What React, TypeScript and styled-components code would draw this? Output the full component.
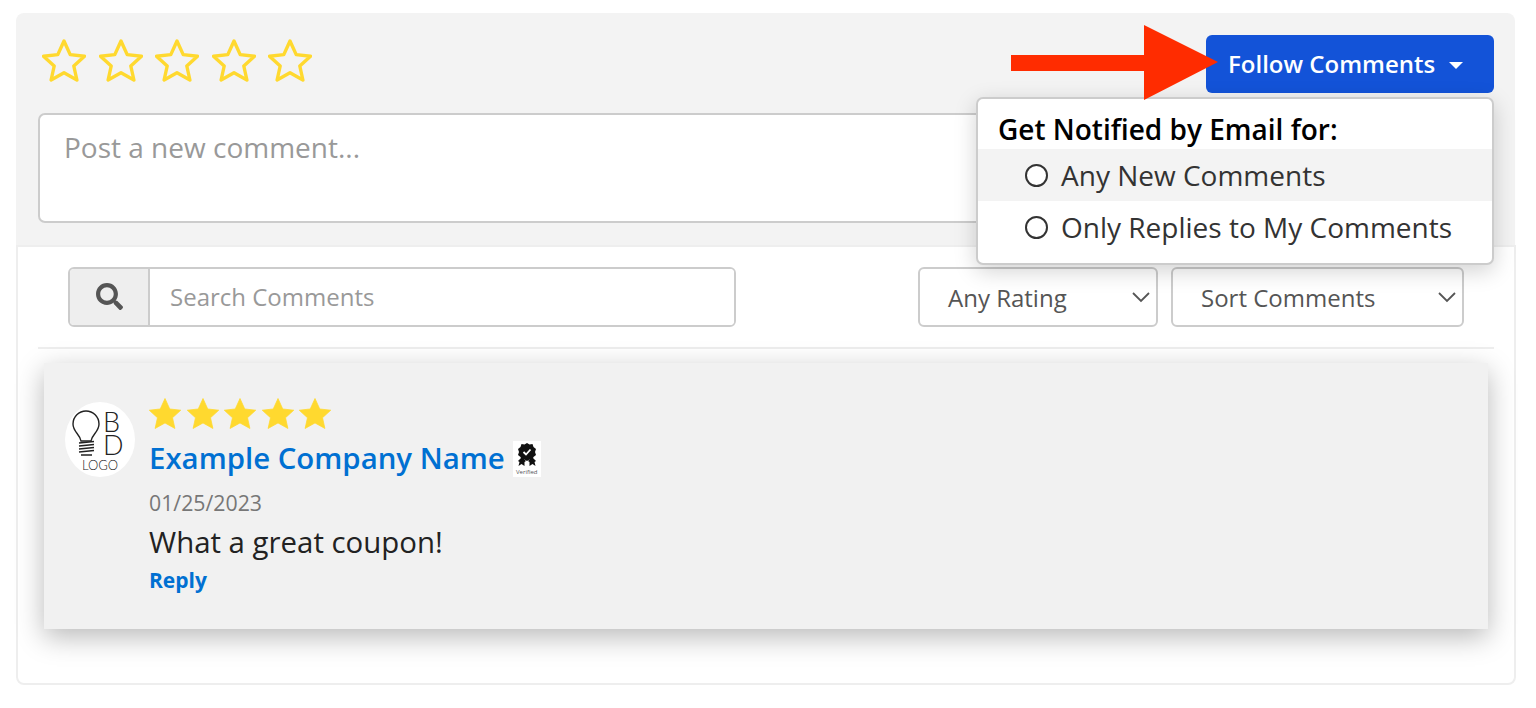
import React from "react";
import styled, { createGlobalStyle } from "styled-components";
import { FaSearch } from "react-icons/fa";

const Global = createGlobalStyle`
  html, body { margin: 0; padding: 0; background: #fff; }
  body { font-family: "Open Sans", "Liberation Sans", sans-serif; overflow: hidden; }
  * { box-sizing: border-box; }
`;

const Page = styled.div`
  position: relative;
  width: 1536px;
  height: 708px;
  padding: 13px 20px 0 16px;
`;

const TopPanel = styled.section`
  width: 1499px;
  height: 232px;
  padding: 22px 21px 0 22px;
  background: #f3f3f3;
  border-radius: 8px 8px 0 0;
`;

const Header = styled.div`
  display: flex;
  justify-content: space-between;
  align-items: flex-start;
  height: 58px;
`;

const RatingInput = styled.div`
  display: flex;
  gap: 12.5px;
  padding: 4px 0 0 4px;
`;

const FollowButton = styled.button`
  display: flex;
  align-items: center;
  width: 288px;
  height: 58px;
  padding: 0 0 2px 22px;
  border: 0;
  border-radius: 6px;
  background: #1353d8;
  color: #fff;
  font: 600 24px "Open Sans", sans-serif;
`;

const Caret = styled.span`
  width: 0;
  height: 0;
  margin: 4px 0 0 14px;
  border-left: 7.5px solid transparent;
  border-right: 7.5px solid transparent;
  border-top: 7.5px solid #fff;
`;

const ComposerWrap = styled.div`
  position: relative;
  margin-top: 20px;
  height: 110px;
`;

const Composer = styled.textarea`
  display: block;
  width: 100%;
  height: 100%;
  padding: 13px 24px;
  border: 2px solid #ccc;
  border-radius: 7px;
  background: #fff;
  resize: none;
  font: 400 28px/38px "Open Sans", sans-serif;
  &::placeholder { color: #999; opacity: 1; }
`;

const PostButton = styled.div`
  position: absolute;
  top: 3px;
  right: 0;
  bottom: 2px;
  width: 120px;
  border-radius: 0 6px 6px 0;
  background: #222;
`;

const Arrow = styled.svg`
  position: absolute;
  left: 1011px;
  top: 25px;
  z-index: 3;
`;

const Dropdown = styled.div`
  position: absolute;
  left: 976px;
  top: 97px;
  z-index: 2;
  width: 518px;
  height: 168px;
  padding-top: 11px;
  background: #fff;
  border: 2px solid #ccc;
  border-radius: 7px;
  box-shadow: 0 6px 22px rgba(0, 0, 0, 0.18);
`;

const DropdownTitle = styled.div`
  height: 39px;
  padding-left: 20px;
  color: #000;
  font-size: 28px;
  font-weight: 600;
  line-height: 38px;
`;

const Option = styled.div<{ $active?: boolean }>`
  display: flex;
  align-items: center;
  gap: 13px;
  height: 52px;
  padding-left: 47px;
  background: ${(p) => (p.$active ? "#f3f3f3" : "#fff")};
  color: #333;
  font-size: 28px;
`;

const Radio = styled.span`
  flex: none;
  width: 23px;
  height: 23px;
  border: 2px solid #333;
  border-radius: 50%;
  background: #fff;
`;

const ListCard = styled.section`
  width: 1500px;
  height: 440px;
  padding: 20px 20px 0;
  background: #fff;
  border: 2px solid #eee;
  border-radius: 0 0 8px 8px;
`;

const Filters = styled.div`
  display: flex;
  justify-content: space-between;
  height: 60px;
  padding: 0 30px;
`;

const SearchGroup = styled.div`
  display: flex;
  width: 668px;
  border: 2px solid #ccc;
  border-radius: 6px;
  overflow: hidden;
`;

const SearchAddon = styled.div`
  display: flex;
  align-items: center;
  justify-content: center;
  width: 80px;
  padding-bottom: 2px;
  background: #eee;
  border-right: 2px solid #ccc;
  color: #555;
  font-size: 27px;
`;

const SearchInput = styled.input`
  flex: 1;
  min-width: 0;
  padding: 0 20px 2px;
  border: 0;
  outline: 0;
  font: 400 24px "Open Sans", sans-serif;
  &::placeholder { color: #999; opacity: 1; }
`;

const Selects = styled.div`
  display: flex;
  gap: 13px;
`;

const SelectBox = styled.div<{ $width: number }>`
  display: flex;
  align-items: center;
  justify-content: space-between;
  width: ${(p) => p.$width}px;
  padding: 0 5px 0 28px;
  border: 2px solid #ccc;
  border-radius: 6px;
  background: #fff;
  color: #555;
  font-size: 24px;
`;

const Divider = styled.hr`
  height: 2px;
  margin: 20px 0 14px;
  border: 0;
  background: #eee;
`;

const CommentCard = styled.article`
  display: flex;
  gap: 14px;
  height: 266px;
  margin: 0 6px;
  padding: 34px 21px 0;
  background: #f1f1f1;
  box-shadow: 0 8px 26px rgba(0, 0, 0, 0.28);
`;

const Avatar = styled.svg`
  flex: none;
  margin-top: 5px;
`;

const CommentBody = styled.div`
  display: flex;
  flex-direction: column;
`;

const RatingRow = styled.div`
  display: flex;
  gap: 3.5px;
  height: 36px;
  margin-left: -1px;
`;

const NameRow = styled.div`
  display: flex;
  align-items: center;
  gap: 8px;
  height: 36px;
  margin-top: 8px;
`;

const CompanyName = styled.a`
  margin-top: -2px;
  color: #0070d2;
  font-size: 29.4px;
  font-weight: 600;
  line-height: 36px;
`;

const VerifiedBadge = styled.div`
  display: flex;
  flex-direction: column;
  align-items: center;
  width: 28px;
  height: 36px;
  background: #fff;
`;

const VerifiedLabel = styled.span`
  color: #555;
  font-size: 6px;
  line-height: 8px;
`;

const DateText = styled.div`
  margin-top: 13px;
  color: #777;
  font-size: 21.3px;
  line-height: 26px;
`;

const CommentText = styled.p`
  margin: 6px 0 0;
  color: #222;
  font-size: 29.4px;
  line-height: 40px;
`;

const ReplyLink = styled.a`
  margin-top: 3px;
  color: #0070d2;
  font-size: 21px;
  font-weight: 700;
  line-height: 30px;
`;

const STAR =
  "22,2 28.2,15.6 42.5,17.2 31.8,27 34.9,41 22,33.8 9.1,41 12.2,27 1.5,17.2 15.8,15.6";

const OutlineStar = () => (
  <svg width="44" height="43" viewBox="0 0 44 43">
    <polygon points={STAR} fill="none" stroke="#ffd92f" strokeWidth="3.4" strokeLinejoin="round" />
  </svg>
);

const SolidStar = () => (
  <svg width="34" height="33" viewBox="0 0 44 43">
    <polygon points={STAR} fill="#ffd92f" stroke="#ffd92f" strokeLinejoin="round" />
  </svg>
);

const Chevron = () => (
  <svg width="20" height="12" viewBox="0 0 20 12">
    <path d="M2 2 L10 10 L18 2" fill="none" stroke="#555" strokeWidth="1.8" />
  </svg>
);

const Logo = () => (
  <Avatar width="70" height="75" viewBox="0 0 70 75">
    <ellipse cx="35" cy="37.5" rx="35" ry="37.5" fill="#fff" />
    <path
      d="M16 39 C15 32 8 30 8 22 A13 13 0 0 1 34 22 C34 30 27 32 26 39 Z"
      fill="none"
      stroke="#222"
      strokeWidth="1.4"
    />
    <path
      d="M14 41 L29 39.5 M14 44 L29 42.5 M14 47 L29 45.5 M14 50 L29 48.5 M16 53 H27"
      stroke="#222"
      strokeWidth="1.3"
      fill="none"
    />
    <text x="38" y="30" fontFamily="Lato" fontWeight="300" fontSize="27" fill="#222">B</text>
    <text x="38" y="53" fontFamily="Lato" fontWeight="300" fontSize="27" fill="#222">D</text>
    <text x="17" y="68" fontFamily="Lato" fontWeight="300" fontSize="13" fill="#222">LOGO</text>
  </Avatar>
);

const Seal = () => (
  <svg width="24" height="27" viewBox="0 0 24 27">
    <path d="M3 20 L7 16 L11 20 L9.5 21 L9.5 25 L6.5 23 L3.5 25 L4.5 21 Z" fill="#111" />
    <path d="M21 20 L17 16 L13 20 L14.5 21 L14.5 25 L17.5 23 L20.5 25 L19.5 21 Z" fill="#111" />
    <path
      d="M12 2 L14.5 3.5 L17.5 3 L18.5 6 L21 8 L20 11 L21 14 L18.5 16 L17.5 18.5 L14.5 18.5 L12 20 L9.5 18.5 L6.5 18.5 L5.5 16 L3 14 L4 11 L3 8 L5.5 6 L6.5 3 L9.5 3.5 Z"
      fill="#111"
    />
    <path d="M8.5 11 L11 13.5 L15.5 8.5" fill="none" stroke="#fff" strokeWidth="1.8" />
  </svg>
);

export default function App() {
  return (
    <Page>
      <Global />
      <TopPanel>
        <Header>
          <RatingInput>
            {[0, 1, 2, 3, 4].map((i) => (
              <OutlineStar key={i} />
            ))}
          </RatingInput>
          <FollowButton>
            Follow Comments
            <Caret />
          </FollowButton>
        </Header>
        <ComposerWrap>
          <Composer placeholder="Post a new comment..." />
          <PostButton />
        </ComposerWrap>
      </TopPanel>

      <Arrow width="208" height="76" viewBox="0 0 208 76">
        <polygon points="0,30 133,30 133,0 207,37 133,75 133,46 0,46" fill="#ff2c00" />
      </Arrow>

      <Dropdown>
        <DropdownTitle>Get Notified by Email for:</DropdownTitle>
        <Option $active>
          <Radio />
          Any New Comments
        </Option>
        <Option>
          <Radio />
          Only Replies to My Comments
        </Option>
      </Dropdown>

      <ListCard>
        <Filters>
          <SearchGroup>
            <SearchAddon>
              <FaSearch />
            </SearchAddon>
            <SearchInput placeholder="Search Comments" />
          </SearchGroup>
          <Selects>
            <SelectBox $width={240}>
              Any Rating
              <Chevron />
            </SelectBox>
            <SelectBox $width={293}>
              Sort Comments
              <Chevron />
            </SelectBox>
          </Selects>
        </Filters>
        <Divider />
        <CommentCard>
          <Logo />
          <CommentBody>
            <RatingRow>
              {[0, 1, 2, 3, 4].map((i) => (
                <SolidStar key={i} />
              ))}
            </RatingRow>
            <NameRow>
              <CompanyName>Example Company Name</CompanyName>
              <VerifiedBadge>
                <Seal />
                <VerifiedLabel>Verified</VerifiedLabel>
              </VerifiedBadge>
            </NameRow>
            <DateText>01/25/2023</DateText>
            <CommentText>What a great coupon!</CommentText>
            <ReplyLink>Reply</ReplyLink>
          </CommentBody>
        </CommentCard>
      </ListCard>
    </Page>
  );
}
